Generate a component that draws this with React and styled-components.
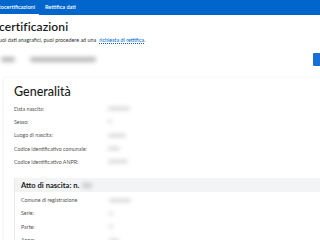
import React from 'react';
import styled, { createGlobalStyle } from 'styled-components';

const Global = createGlobalStyle`
  html, body { margin:0; padding:0; background:#fff; }
  body { font-family: Lato, "Open Sans", sans-serif; color:#1a1a1a; overflow:hidden; width:320px; height:240px; }
`;

const TopBar = styled.nav`
  display:flex;
  height:15px;
  background-color:#0066cc;
  margin-left:-12px;
  gap:2px;
`;

const Tab = styled.div`
  display:flex;
  align-items:center;
  padding:0 4px;
  height:100%;
  box-sizing:border-box;
  font-size:5.5px;
  font-weight:600;
  color:#fff;
  border-bottom:${p => (p.active ? '1.5px solid #fff' : '1.5px solid transparent')};
`;

const Header = styled.section`
  display:flex;
  flex-direction:column;
  margin-left:-1px;
`;

const Title = styled.h1`
  margin:4px 0 0 0;
  font-size:12px;
  font-weight:600;
  letter-spacing:0.1px;
`;

const Lead = styled.p`
  margin:3px 0 0 0;
  font-size:5.4px;
  color:#333;
  a { color:#0066cc; text-decoration:underline dotted; margin-left:3px; }
`;

const Toolbar = styled.div`
  display:flex;
  align-items:center;
  margin-top:9px;
  height:14px;
  padding-left:1px;
  gap:15px;
`;

const Blur = styled.span`
  display:inline-block;
  width:${p => p.w}px;
  height:${p => p.h || 6}px;
  background:${p => p.c || '#b8b8b8'};
  filter:blur(2px);
  border-radius:2px;
`;

const BlueBtn = styled.div`
  margin-left:auto;
  margin-right:-3px;
  width:10px;
  height:13px;
  background:#1a6fd6;
  border-radius:1px;
`;

const Card = styled.section`
  margin:12px 0 0 4px;
  padding:6px 0 0 10px;
  background:#fff;
  box-shadow:-1px 0 3px rgba(0,0,0,0.06);
`;

const CardTitle = styled.h2`
  margin:0 0 3px 0;
  font-size:12.5px;
  font-weight:500;
`;

const Row = styled.div`
  display:grid;
  grid-template-columns:94px 1fr;
  align-items:center;
  height:13.3px;
  font-size:5.3px;
  color:#555;
`;

const SubCard = styled.section`
  margin-top:10px;
  border-left:1px solid #e6e9ed;
`;

const SubHead = styled.div`
  display:flex;
  align-items:center;
  height:14px;
  padding-left:6px;
  background:#f3f4f6;
  font-size:7.6px;
  font-weight:700;
  gap:3px;
`;

const SubBody = styled.div`
  padding:1px 0 0 6px;
`;

const SubRow = styled(Row)`
  grid-template-columns:88px 1fr;
`;

const general = [
  ['Data nascita:', 22],
  ['Sesso:', 4],
  ['Luogo di nascita:', 18],
  ['Codice identificativo comunale:', 12],
  ['Codice identificativo ANPR:', 20],
];

const atto = [
  ['Comune di registrazione', 22],
  ['Serie:', 4],
  ['Parte:', 4],
  ['Anno:', 10],
];

const App = () => (
  <>
    <Global />
    <TopBar>
      <Tab active>Autocertificazioni</Tab>
      <Tab>Rettifica dati</Tab>
    </TopBar>
    <Header>
      <Title>certificazioni</Title>
      <Lead>
        uoi dati anagrafici, puoi procedere ad una<a>richiesta di rettifica.</a>
      </Lead>
    </Header>
    <Toolbar>
      <Blur w={14} h={5} />
      <Blur w={66} h={5} />
      <BlueBtn />
    </Toolbar>
    <Card>
      <CardTitle>Generalità</CardTitle>
      {general.map(([label, w]) => (
        <Row key={label}>
          <span>{label}</span>
          <Blur w={w} h={3} c="#cfcfcf" />
        </Row>
      ))}
      <SubCard>
        <SubHead>
          Atto di nascita: n. <Blur w={10} h={5} c="#c8c8c8" />
        </SubHead>
        <SubBody>
          {atto.map(([label, w]) => (
            <SubRow key={label}>
              <span>{label}</span>
              <Blur w={w} h={3} c="#cfcfcf" />
            </SubRow>
          ))}
        </SubBody>
      </SubCard>
    </Card>
  </>
);

export default App;
